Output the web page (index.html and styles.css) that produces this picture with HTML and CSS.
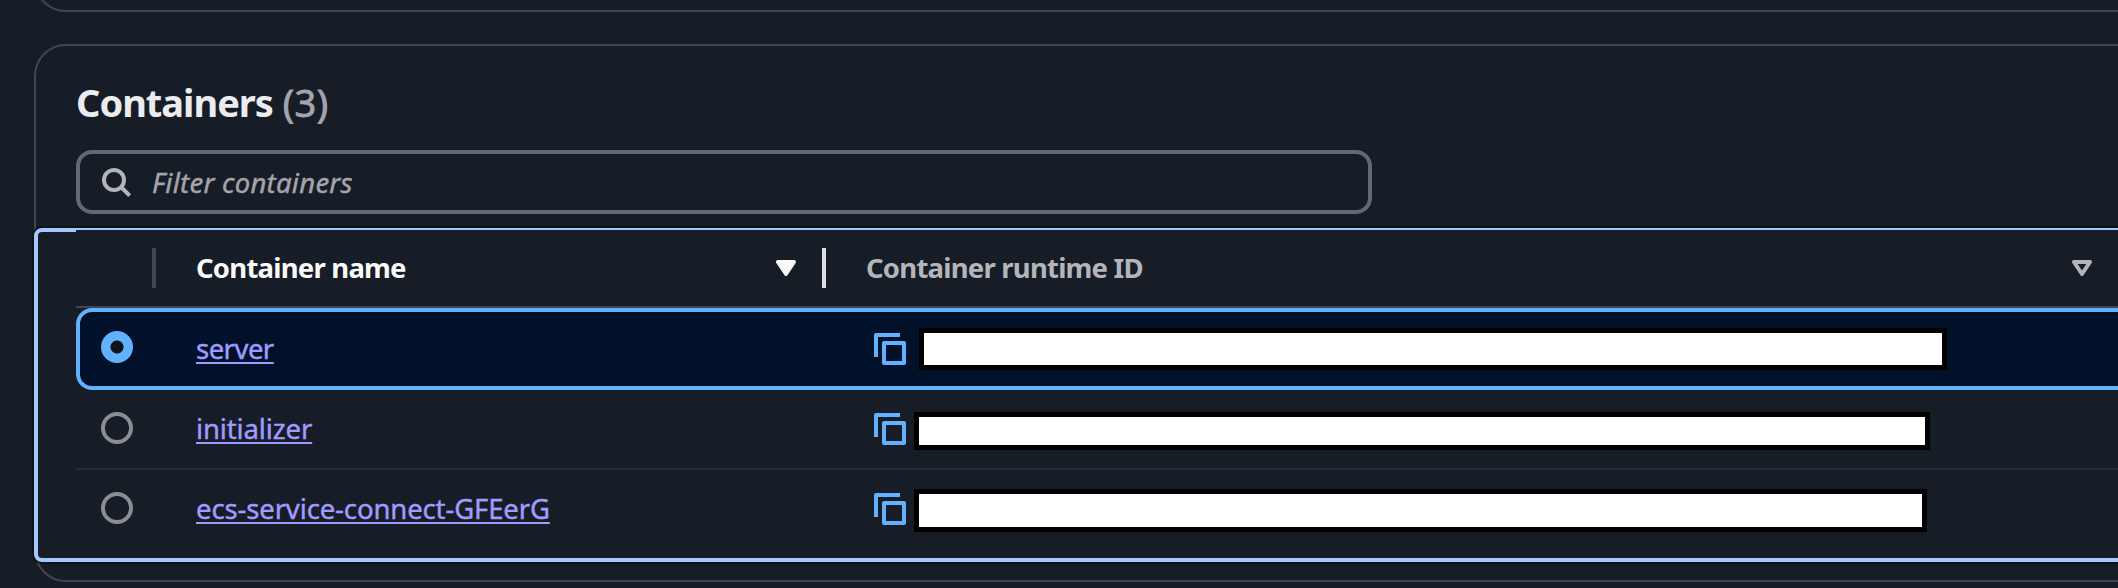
FILE: index.html
```html
<!DOCTYPE html>
<html lang="en">
<head>
<meta charset="utf-8">
<title>Containers</title>
<link rel="stylesheet" href="styles.css">
</head>
<body>
<main class="page">
  <section class="panel panel-previous"></section>
  <section class="panel panel-containers">
    <header class="panel-header">
      <h2 class="title">Containers <span class="count">(3)</span></h2>
      <div class="filter">
        <svg class="search" viewBox="0 0 32 32"><circle cx="14" cy="14" r="10"/><path d="M21 21l8.7 8.7"/></svg>
        <span class="placeholder">Filter containers</span>
      </div>
    </header>
    <div class="table">
      <div class="row head">
        <div class="cell select"></div>
        <div class="cell name"><span class="label">Container name</span><svg class="sort" viewBox="0 0 20 16"><path class="solid" d="M2 2h16l-8 12z"/></svg></div>
        <div class="cell runtime"><span class="label">Container runtime ID</span><svg class="sort" viewBox="0 0 20 16"><path d="M2 2h16l-8 12z"/></svg></div>
      </div>
      <div class="row selected">
        <div class="cell select"><span class="radio checked"></span></div>
        <div class="cell name"><a class="link-server" href="#">server</a></div>
        <div class="cell runtime"><svg class="copy" viewBox="0 0 32 32"><path d="M2 24V2h24"/><path d="M10 10h20v20H10z"/></svg><span class="redacted redacted-server"></span></div>
      </div>
      <div class="row">
        <div class="cell select"><span class="radio"></span></div>
        <div class="cell name"><a href="#">initializer</a></div>
        <div class="cell runtime"><svg class="copy" viewBox="0 0 32 32"><path d="M2 24V2h24"/><path d="M10 10h20v20H10z"/></svg><span class="redacted redacted-initializer"></span></div>
      </div>
      <div class="row last">
        <div class="cell select"><span class="radio"></span></div>
        <div class="cell name"><a href="#">ecs-service-connect-GFEerG</a></div>
        <div class="cell runtime"><svg class="copy" viewBox="0 0 32 32"><path d="M2 24V2h24"/><path d="M10 10h20v20H10z"/></svg><span class="redacted redacted-connect"></span></div>
      </div>
    </div>
  </section>
</main>
</body>
</html>
```
FILE: styles.css
```css
* { box-sizing: border-box; }
body {
  margin: 0;
  background: #161d26;
  color: #ebebf0;
  font-family: "Noto Sans", "Open Sans", sans-serif;
}
.page {
  height: 588px;
  overflow: hidden;
  padding-left: 34px;
}
.panel {
  width: 2200px;
  border: 2px solid #424650;
  border-radius: 32px;
}
.panel-previous {
  height: 80px;
  margin-top: -68px;
  margin-bottom: 32px;
}
.panel-containers { height: 538px; }
.panel-header { padding: 30px 0 0 40px; }
.title {
  margin: 0;
  height: 54px;
  font-size: 38px;
  line-height: 52px;
  font-weight: 700;
  letter-spacing: -1px;
  white-space: nowrap;
}
.count {
  margin-left: 1px;
  color: #a4a4ad;
  font-weight: 400;
  letter-spacing: 0.4px;
  -webkit-text-stroke: 0.8px #a4a4ad;
}
.filter {
  display: flex;
  align-items: center;
  width: 1296px;
  height: 64px;
  margin-top: 20px;
  padding-left: 20px;
  border: 4px solid #656871;
  border-radius: 16px;
}
.search {
  width: 32px;
  height: 32px;
  fill: none;
  stroke: #b4b4bb;
  stroke-width: 4;
}
.placeholder {
  margin-left: 20px;
  padding-top: 2px;
  font-size: 27.5px;
  line-height: 40px;
  font-style: italic;
  letter-spacing: 0.25px;
  color: #a4a4ad;
  -webkit-text-stroke: 0.4px #a4a4ad;
}
.table {
  margin: 14px 0 0 -2px;
  height: 334px;
  padding-left: 38px;
  border: 4px solid #a3c8ff;
  border-radius: 8px;
  box-shadow: 0 0 0 2px #0f1216;
}
.row {
  display: grid;
  grid-template-columns: 80px 670px 1296px;
  height: 80px;
  border-bottom: 2px solid #232b37;
  font-size: 27.5px;
}
.head {
  height: 78px;
  margin-top: -2px;
  border-color: #424650;
  background: #161d26;
  font-weight: 700;
  letter-spacing: -0.78px;
  color: #b4b4bb;
}
.selected {
  height: 82px;
  border: 0;
  border-radius: 16px;
  background: #001129;
  box-shadow: inset 0 0 0 4px #61b1ff;
}
.last { border-bottom-color: transparent; }
.cell { display: flex; align-items: center; }
.select { padding-left: 25px; }
.name { padding-left: 40px; }
.runtime { padding-left: 48px; }
.head .runtime { padding-left: 40px; }
.head .name { color: #f9f9fa; }
.label { padding-bottom: 2px; }
.head .cell::after {
  content: "";
  width: 4px;
  height: 40px;
  background: #424650;
}
.head .select { justify-content: flex-end; }
.head .name::after { background: #dedee3; }
.sort {
  width: 20px;
  height: 16px;
  margin-left: auto;
  margin-right: 26px;
  fill: none;
  stroke: currentColor;
  stroke-width: 4;
  stroke-linejoin: round;
}
.sort .solid { fill: currentColor; }
.radio {
  width: 32px;
  height: 32px;
  margin-bottom: 2px;
  border: 4px solid #8c8c94;
  border-radius: 50%;
}
.checked {
  margin-bottom: 4px;
  border: 0;
  background: radial-gradient(circle, #0f141a 6px, #61b1ff 7px);
}
a {
  padding-bottom: 2px;
  color: #a19bff;
  letter-spacing: -0.13px;
  text-decoration-thickness: 2px;
  text-underline-offset: 3px;
  text-decoration-skip-ink: none;
  -webkit-text-stroke: 0.4px #a19bff;
}
.link-server { letter-spacing: -0.53px; }
.copy {
  width: 32px;
  height: 32px;
  fill: none;
  stroke: #61b1ff;
  stroke-width: 4;
  stroke-linejoin: round;
}
.redacted {
  margin-left: 8px;
  border: 5px solid #000;
  background: #fff;
}
.redacted-server { width: 1028px; height: 42px; margin-left: 13px; }
.redacted-initializer { width: 1016px; height: 38px; margin-top: 4px; }
.redacted-connect { width: 1013px; height: 43px; margin-top: 3px; }
```
